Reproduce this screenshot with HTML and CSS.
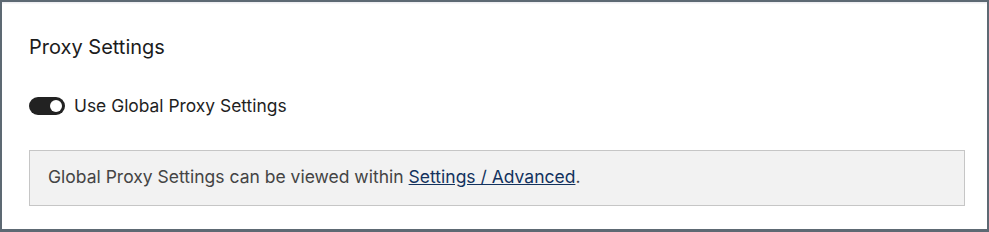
FILE: index.html
```html
<!DOCTYPE html>
<html lang="en">
<head>
    <meta charset="UTF-8">
    <title>Proxy Settings</title>
    <link rel="stylesheet" href="styles.css">
</head>
<body>
    <div class="panel">
        <h2 class="panel-title">Proxy Settings</h2>

        <label class="toggle-row">
            <span class="toggle on"><span class="knob"></span></span>
            <span>Use Global Proxy Settings</span>
        </label>

        <div class="notice">
            Global Proxy Settings can be viewed within <a href="#">Settings / Advanced</a>.
        </div>
    </div>
</body>
</html>
```

FILE: styles.css
```css
* {
    margin: 0;
    padding: 0;
    box-sizing: border-box;
}

body {
    font-family: Inter, "Noto Sans", sans-serif;
    background: #fff;
    color: #1f1f1f;
}

.panel {
    width: 989px;
    height: 232px;
    border: 2px solid #5d6973;
    border-bottom-width: 3px;
    box-shadow: inset 0 1px 0 #eeeef2, inset 0 2px 0 #f6f6f8;
    padding: 33px 22px 0 27px;
}

.panel-title {
    font-size: 20px;
    line-height: 24px;
    font-weight: 400;
    color: #1c1c1c;
    margin-bottom: 36.5px;
}

.toggle-row {
    display: flex;
    align-items: center;
    gap: 9px;
    font-size: 17.4px;
    line-height: 20px;
    color: #1f1f1f;
    cursor: pointer;
}

.toggle {
    width: 36px;
    height: 18px;
    border-radius: 9px;
    background: #222;
    display: flex;
    align-items: center;
    justify-content: flex-end;
    padding: 0 3px;
}

.knob {
    width: 12px;
    height: 12px;
    border-radius: 50%;
    background: #fff;
}

.notice {
    margin-top: 34.5px;
    height: 56px;
    border: 1px solid #c6c6c6;
    background: #f2f2f2;
    padding: 0 18px 3px;
    display: flex;
    align-items: center;
    font-size: 17.5px;
    color: #444;
}

.notice a {
    color: #13325e;
    text-decoration: underline;
    margin: 0 0 0 5px;
}
```
